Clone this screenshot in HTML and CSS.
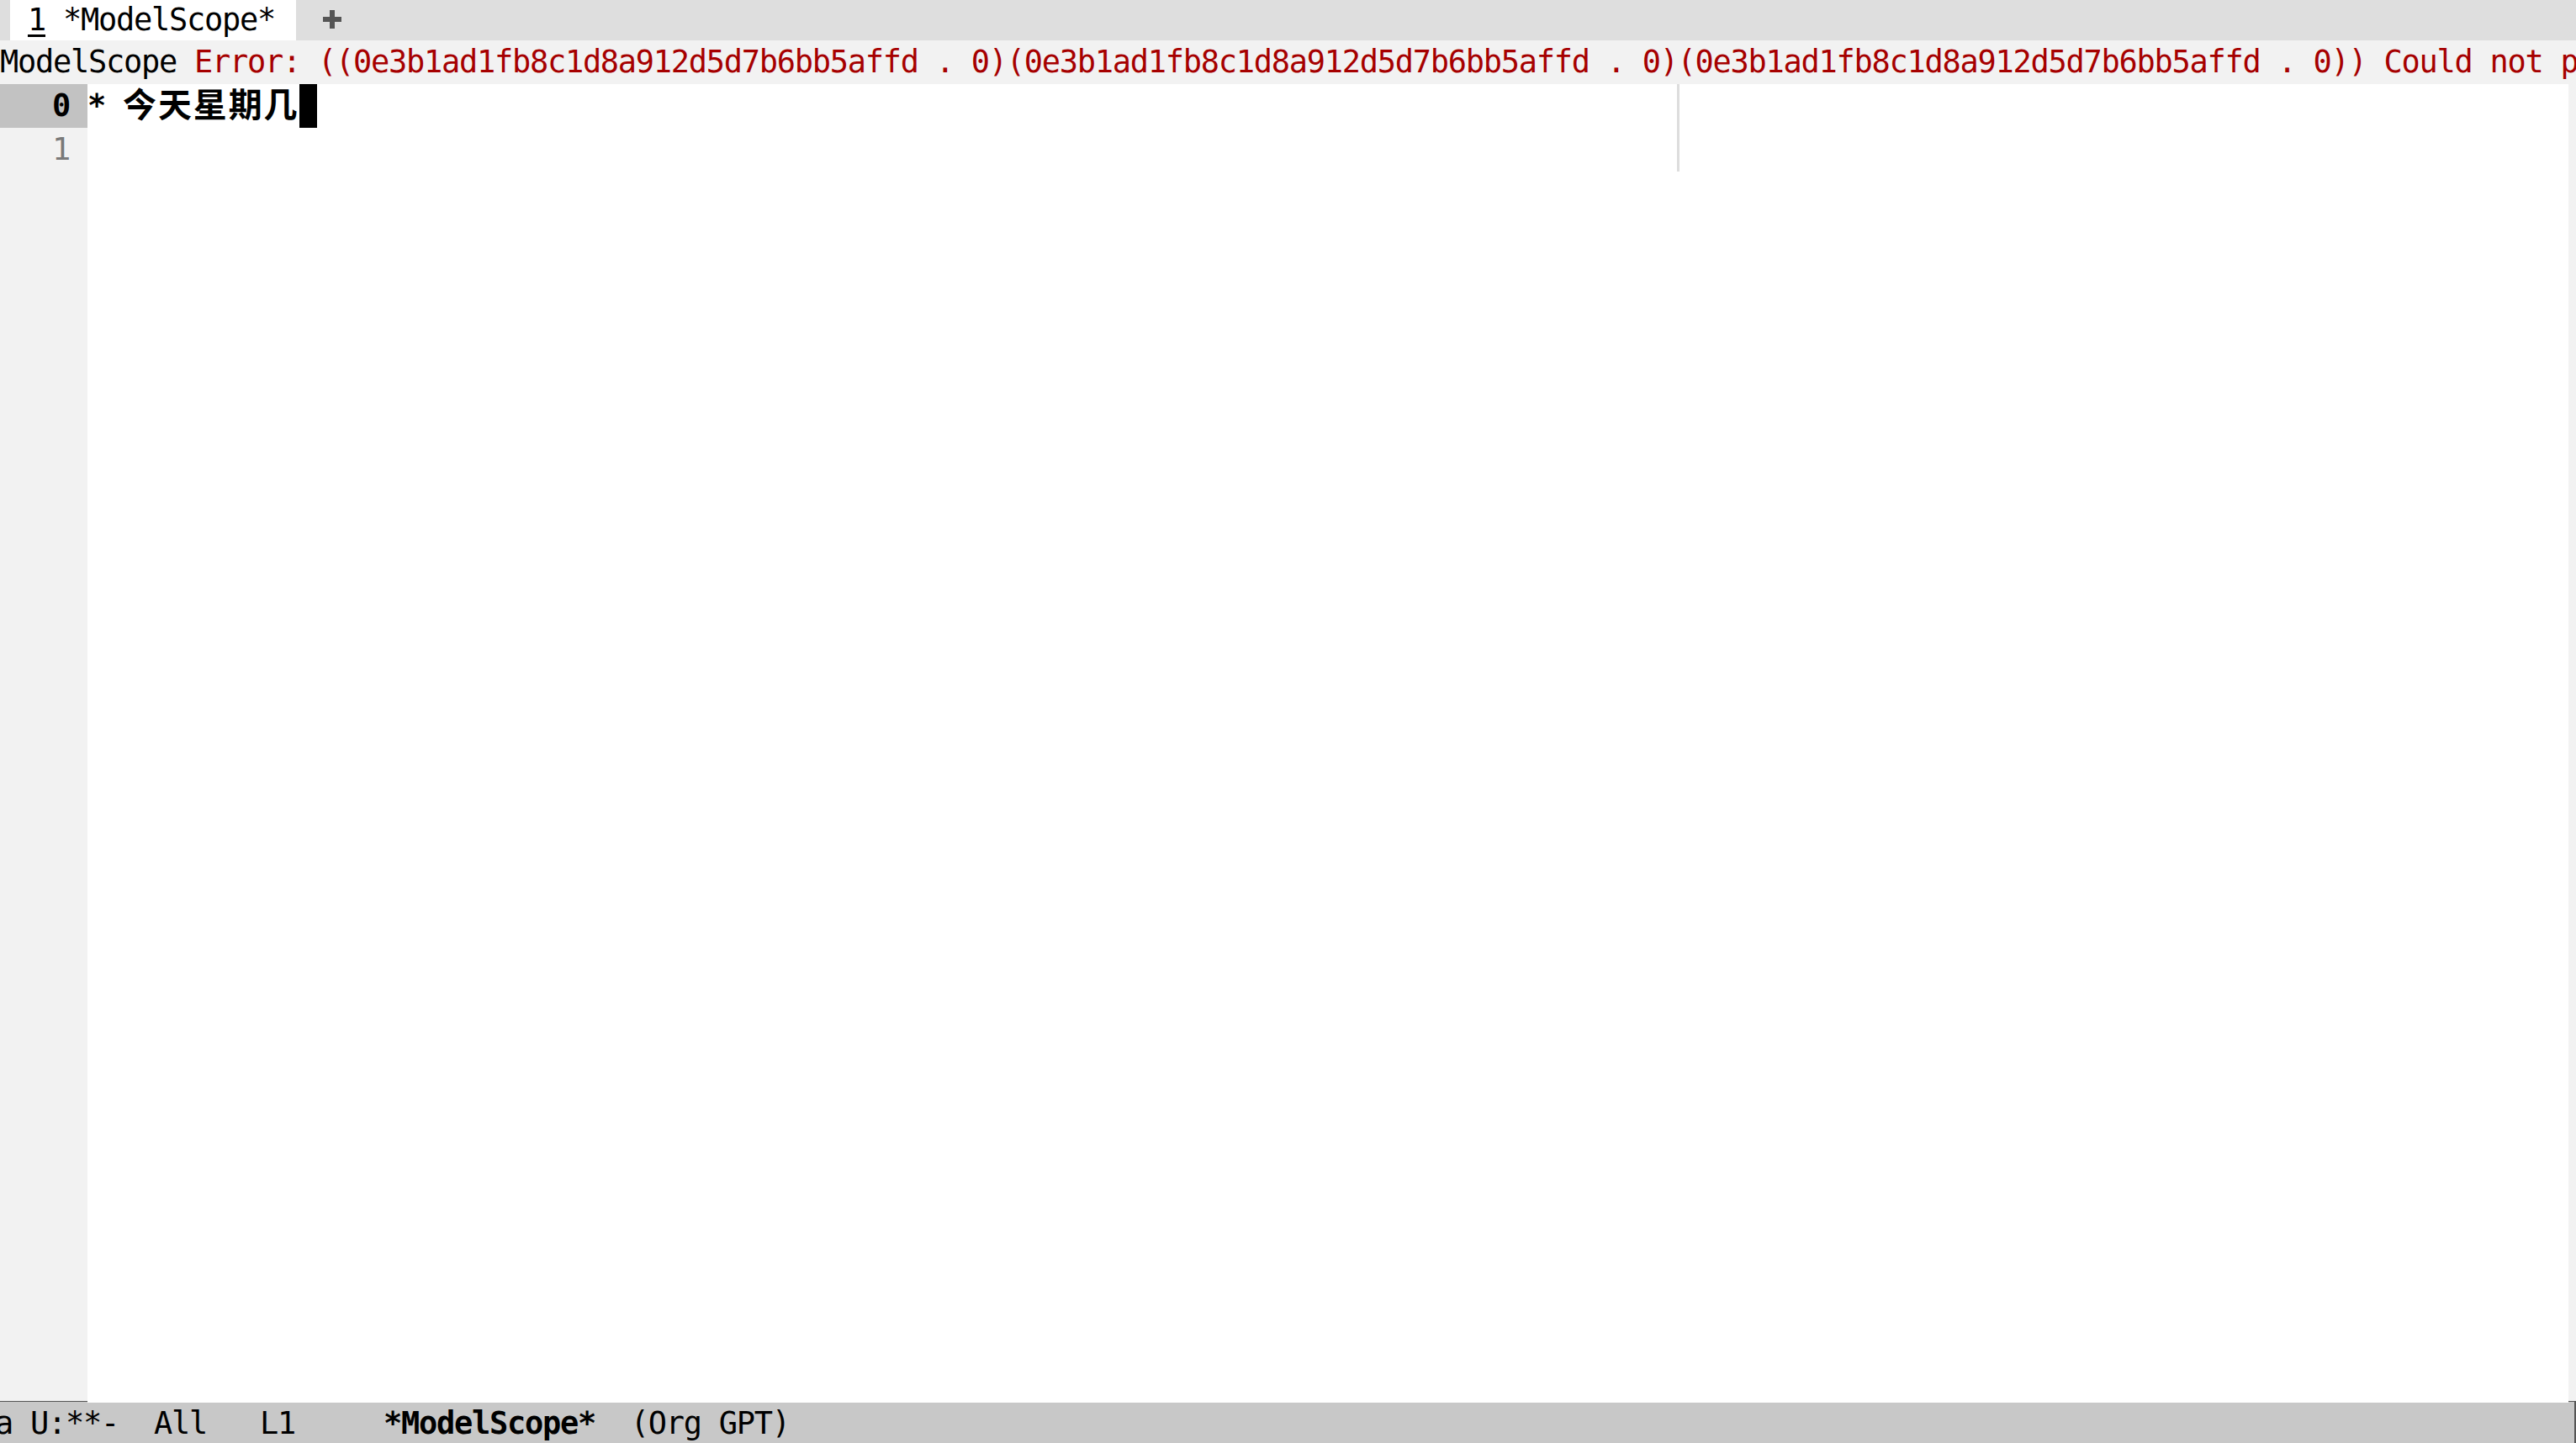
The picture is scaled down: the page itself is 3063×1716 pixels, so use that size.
FILE: index.html
```html
<!DOCTYPE html>
<html lang="zh">
<head>
<meta charset="utf-8">
<title>*ModelScope*</title>
<link rel="stylesheet" href="styles.css">
</head>
<body>
<div class="frame">
  <div class="tabbar">
    <div class="tab"> <span class="tab-num">1</span> *ModelScope* </div>
    <div class="tab-add">
      <svg width="24" height="24" viewBox="0 0 24 24"><path d="M12 1v22M1 12h22" stroke="#555" stroke-width="6" fill="none"/></svg>
    </div>
  </div>
  <div class="echo">ModelScope <span class="err">Error: ((0e3b1ad1fb8c1d8a912d5d7b6bb5affd . 0)(0e3b1ad1fb8c1d8a912d5d7b6bb5affd . 0)(0e3b1ad1fb8c1d8a912d5d7b6bb5affd . 0)) Could not parse response</span></div>
  <div class="editor">
    <div class="gutter">
      <div class="lnum current">0</div>
      <div class="lnum">1</div>
    </div>
    <div class="text">
      <div class="row heading">* <span class="cjk">今天星期几</span><span class="cursor"></span></div>
      <div class="row"></div>
      <div class="fill-col"></div>
    </div>
    <div class="fringe"></div>
  </div>
  <div class="modeline"><span class="ml-text">a U:**-  All   L1     <b>*ModelScope*</b>  (Org GPT)</span></div>
</div>
</body>
</html>
```
FILE: styles.css
```css
html, body {
  margin: 0;
  padding: 0;
  background: #ffffff;
}
.frame {
  width: 3063px;
  height: 1716px;
  display: flex;
  flex-direction: column;
  overflow: hidden;
  font-family: "DejaVu Sans Mono", "Noto Sans CJK SC", monospace;
  font-size: 37px;
  letter-spacing: -1.28px;
  color: #000;
}
.tabbar {
  height: 48px;
  flex: none;
  background: #dedede;
  display: flex;
  padding-left: 12px;
}
.tab {
  width: 340px;
  background: #ffffff;
  line-height: 48px;
  white-space: pre;
  overflow: hidden;
}
.tab-num {
  text-decoration: underline;
  text-decoration-thickness: 3px;
  text-underline-offset: 5px;
}
.tab-add {
  margin-left: 31px;
  padding-top: 11px;
}
.tab-add svg {
  display: block;
}
.echo {
  height: 52px;
  flex: none;
  background: #f2f2f2;
  line-height: 52px;
  white-space: pre;
  overflow: hidden;
}
.err {
  color: #a60000;
}
.editor {
  flex: 1;
  display: flex;
  min-height: 0;
}
.gutter {
  width: 104px;
  flex: none;
  background: #f2f2f2;
}
.lnum {
  height: 52px;
  line-height: 52px;
  text-align: right;
  padding-right: 21px;
  color: #7a7a7a;
}
.lnum.current {
  background: #c2c2c2;
  color: #000;
  font-weight: bold;
}
.text {
  flex: 1;
  position: relative;
  background: #ffffff;
}
.row {
  height: 52px;
  line-height: 52px;
  white-space: pre;
}
.heading {
  font-weight: bold;
}
.cjk {
  font-family: "Noto Sans CJK SC", sans-serif;
  font-size: 40px;
  letter-spacing: 1.9px;
  line-height: 45px;
  vertical-align: top;
}
.cursor {
  display: inline-block;
  width: 21px;
  height: 52px;
  background: #000;
  vertical-align: top;
}
.fill-col {
  position: absolute;
  left: 1890px;
  top: 0;
  width: 3px;
  height: 104px;
  background: #dddddd;
}
.fringe {
  width: 9px;
  flex: none;
  background: #f2f2f2;
}
.modeline {
  height: 47px;
  flex: none;
  background: #c8c8c8;
  border-top: 1px solid #555555;
  border-right: 2px solid #555555;
  line-height: 47px;
  white-space: pre;
  overflow: hidden;
  padding-top: 2px;
  margin-top: -2px;
}
.ml-text {
  display: block;
  margin-left: -6px;
}
.modeline b {
  font-weight: bold;
}
```
